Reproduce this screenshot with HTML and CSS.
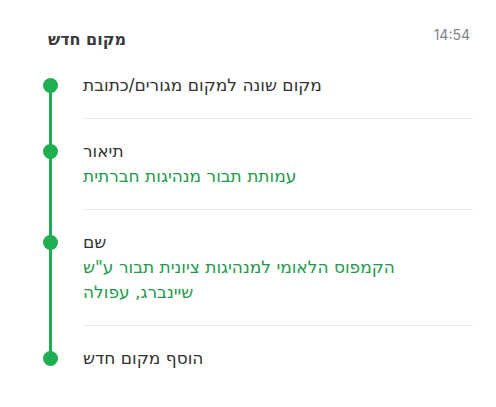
FILE: index.html
```html
<!DOCTYPE html>
<html lang="he">
<head>
  <meta charset="UTF-8" />
  <title>מקום חדש</title>
  <link rel="stylesheet" href="styles.css">
</head>
<body>

<div class="card">
  <div class="card-head">
    <h3 class="title">מקום חדש</h3>
    <span class="time">14:54</span>
  </div>

  <ul class="timeline">
    <li class="step">
      <span class="dot"></span>
      <div class="step-body">
        <div class="label">מקום שונה למקום מגורים/כתובת</div>
      </div>
    </li>
    <li class="step">
      <span class="dot"></span>
      <div class="step-body">
        <div class="label">תיאור</div>
        <div class="value">עמותת תבור מנהיגות חברתית</div>
      </div>
    </li>
    <li class="step">
      <span class="dot"></span>
      <div class="step-body">
        <div class="label">שם</div>
        <div class="value narrow">הקמפוס הלאומי למנהיגות ציונית תבור ע"ש שיינברג, עפולה</div>
      </div>
    </li>
    <li class="step">
      <span class="dot"></span>
      <div class="step-body">
        <div class="label">הוסף מקום חדש</div>
      </div>
    </li>
  </ul>
</div>

</body>
</html>
```

FILE: styles.css
```css
body {
  margin: 0;
  background: #fff;
  font-family: 'DejaVu Sans', 'Liberation Sans', sans-serif;
  color: #333;
}

.card {
  padding: 27px 23px 0 30px;
}

.card-head {
  display: flex;
  justify-content: space-between;
  align-items: flex-start;
  padding-left: 18px;
  padding-right: 3px;
}

.title {
  margin: 2px 0 0;
  font-size: 16px;
  font-weight: bold;
  line-height: 22px;
  color: #3a3a3a;
}

.time {
  font-family: Inter, 'Liberation Sans', sans-serif;
  font-size: 14px;
  line-height: 16px;
  color: #80838a;
}

.timeline {
  list-style: none;
  margin: 2px 0 0;
  padding: 0;
}

.step {
  display: grid;
  grid-template-columns: 40px 1fr;
  column-gap: 13px;
  position: relative;
}

/* green line between dots */
.step::before {
  content: "";
  position: absolute;
  left: 19px;
  width: 3px;
  top: 0;
  bottom: 0;
  background: #1fae52;
}

.step:first-child::before {
  top: 33px;
}

.step:last-child::before {
  bottom: auto;
  height: 33px;
}

.dot {
  width: 15px;
  height: 15px;
  border-radius: 50%;
  background: #1fae52;
  margin: 25px 0 0 13px;
  position: relative;
}

.step-body {
  padding: 20px 0 20px;
  border-bottom: 1px solid #e8e8ea;
}

.step:last-child .step-body {
  border-bottom: none;
}

.label {
  font-size: 17px;
  line-height: 25px;
  color: #333;
}

.value {
  font-size: 17px;
  line-height: 25px;
  color: #1d9a4b;
}

.narrow {
  max-width: 320px;
}
```
